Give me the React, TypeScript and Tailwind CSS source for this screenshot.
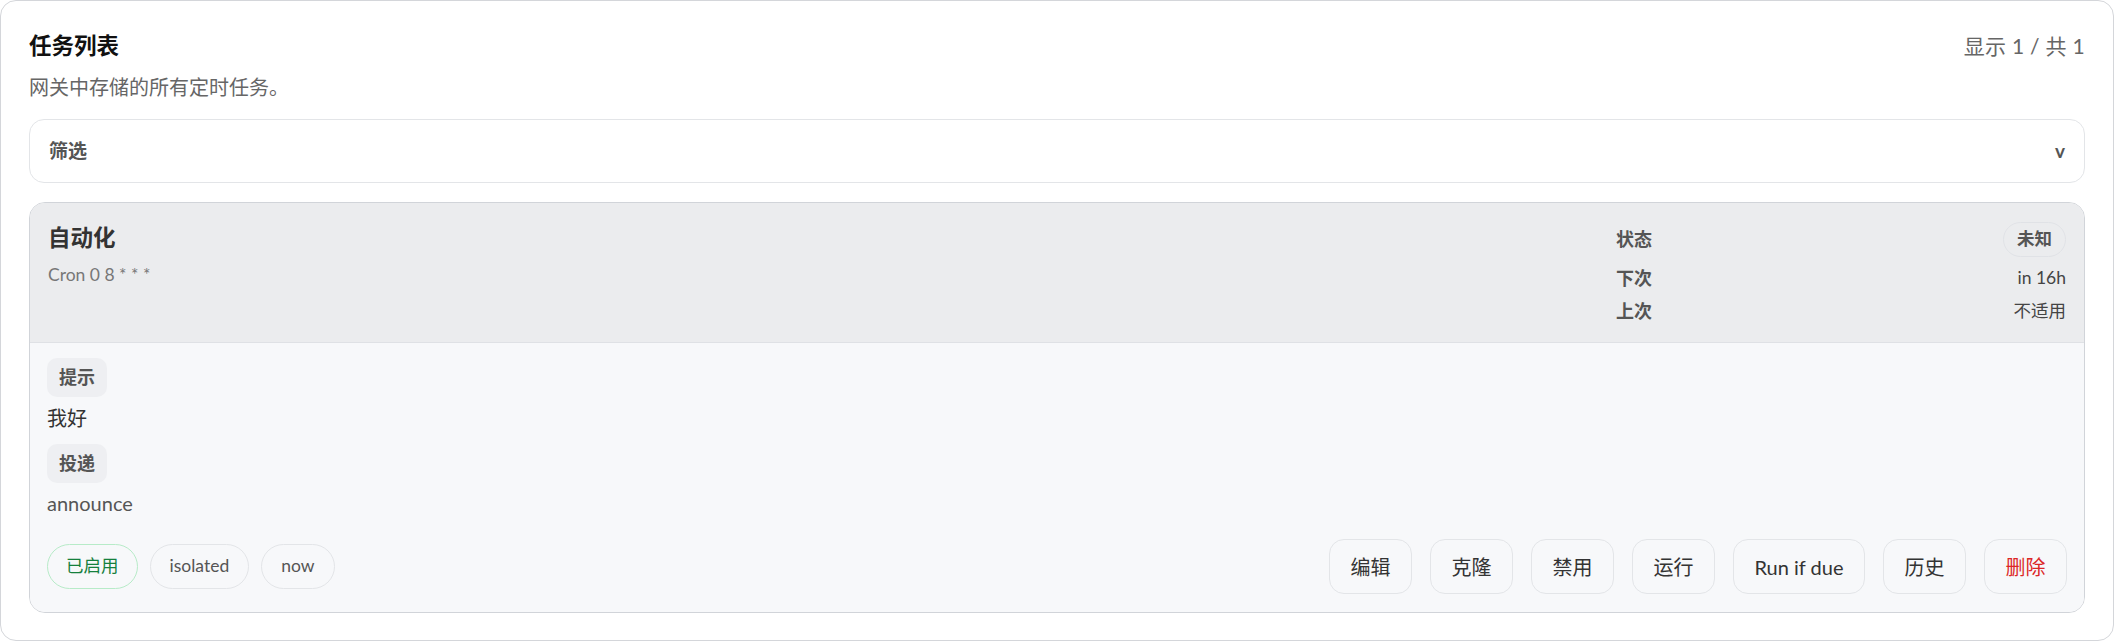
import React from "react";

const meta = [
  { label: "下次", value: "in 16h" },
  { label: "上次", value: "不适用" },
];

const actions = ["编辑", "克隆", "禁用", "运行", "Run if due", "历史"];

function FieldChip({ children }: { children: React.ReactNode }) {
  return (
    <div className="inline-flex h-[39px] items-center rounded-[10px] bg-[#eeeff2] px-3 text-[18px] font-bold text-[#555]">
      {children}
    </div>
  );
}

function Tag({ children, green }: { children: React.ReactNode; green?: boolean }) {
  return (
    <span
      className={
        green
          ? "inline-flex h-[45px] items-center rounded-full border border-[#b7ebc8] px-[18px] text-[17.5px] text-[#15803d]"
          : "inline-flex h-[45px] items-center rounded-full border border-[#e3e5e8] px-[19px] text-[17.5px] text-[#555]"
      }
    >
      {children}
    </span>
  );
}

export default function App() {
  return (
    <div className="min-h-[642px] w-full bg-white font-[Lato,'Noto_Sans_CJK_SC',sans-serif]">
      <div className="rounded-[16px] border border-[#d4d6da] bg-white px-[28px] pt-[29px] pb-[27px]">
        <div className="flex items-center justify-between">
          <h2 className="text-[22.5px] leading-[32px] font-bold text-[#111]">任务列表</h2>
          <span className="text-[21px] leading-[32px] tracking-[0.3px] text-[#666]">显示 1 / 共 1</span>
        </div>
        <p className="mt-[11px] text-[20px] leading-[28px] text-[#666]">网关中存储的所有定时任务。</p>

        <div className="mt-[18px] flex h-[64px] items-center justify-between rounded-[15px] border border-[#e3e5e8] px-[19px]">
          <span className="text-[19px] font-semibold text-[#555]">筛选</span>
          <span className="text-[19px] font-bold text-[#555]">v</span>
        </div>

        <div className="mt-[19px] overflow-hidden rounded-[16px] border border-[#d1d4d9]">
          <div className="flex justify-between border-b border-[#dfe1e5] bg-[#ebecee] px-[18px] py-[19px]">
            <div>
              <div className="text-[22.5px] leading-[32px] font-bold text-[#333]">自动化</div>
              <div className="mt-2 text-[17.5px] leading-[26px] text-[#777]">Cron 0 8 * * *</div>
            </div>
            <div className="flex w-[450px] flex-col gap-[9px]">
              <div className="flex h-[35px] items-center justify-between">
                <span className="text-[18px] font-bold text-[#555]">状态</span>
                <span className="inline-flex h-[35px] items-center rounded-full border border-[#e0e2e6] px-[13px] text-[17.5px] font-bold text-[#555]">
                  未知
                </span>
              </div>
              {meta.map((m) => (
                <div key={m.label} className="flex h-[24px] items-center justify-between">
                  <span className="text-[18px] font-bold text-[#555]">{m.label}</span>
                  <span className="text-[17.5px] text-[#444]">{m.value}</span>
                </div>
              ))}
            </div>
          </div>

          <div className="bg-[#f7f8fa] px-[17px] pt-[15px] pb-[18px]">
            <FieldChip>提示</FieldChip>
            <div className="mt-[7px] text-[20px] leading-[28px] text-[#333]">我好</div>
            <div className="mt-[12px]">
              <FieldChip>投递</FieldChip>
            </div>
            <div className="mt-[6px] text-[20px] leading-[28px] text-[#555]">announce</div>

            <div className="mt-[22px] flex items-center justify-between">
              <div className="flex gap-3">
                <Tag green>已启用</Tag>
                <Tag>isolated</Tag>
                <Tag>now</Tag>
              </div>
              <div className="flex gap-[18px]">
                {actions.map((a) => (
                  <button
                    key={a}
                    className="h-[55px] rounded-[15px] border border-[#e3e5e8] bg-[#f7f8fa] px-[20.5px] text-[20px] text-[#333]"
                  >
                    {a}
                  </button>
                ))}
                <button className="h-[55px] rounded-[15px] border border-[#e3e5e8] bg-[#f7f8fa] px-[20.5px] text-[20px] text-[#dc2626]">
                  删除
                </button>
              </div>
            </div>
          </div>
        </div>
      </div>
    </div>
  );
}
